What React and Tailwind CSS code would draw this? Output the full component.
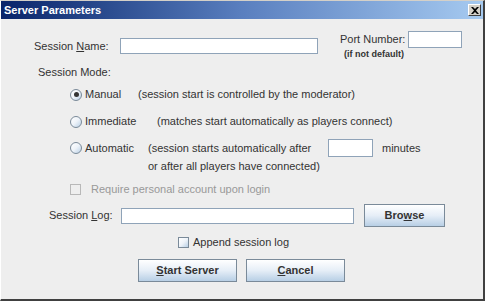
import React from "react";

const font = { fontFamily: '"Liberation Sans", Arial, sans-serif' };

// Ocean-style radio button
function Radio({ checked }) {
  return (
    <span className="relative flex h-[12px] w-[12px] shrink-0 items-center justify-center rounded-full border border-[#7a8a99] bg-gradient-to-br from-white via-[#eef3f9] to-[#b8cfe5]">
      {checked && <span className="h-[5px] w-[5px] rounded-full bg-[#333333]" />}
    </span>
  );
}

function Check({ disabled }) {
  return disabled ? (
    <span className="h-[11px] w-[11px] shrink-0 border border-[#b8b8b8]" />
  ) : (
    <span className="h-[11px] w-[11px] shrink-0 border border-[#7a8a99] bg-gradient-to-br from-white via-[#eef3f9] to-[#b8cfe5]" />
  );
}

function Field({ className }) {
  return <div className={"border border-[#8fa3b8] bg-white " + className} />;
}

function Button({ children, className }) {
  return (
    <button
      className={
        "flex items-center justify-center border border-[#7a8a99] bg-gradient-to-b from-white via-[#e6eef7] to-[#b8cfe5] text-[11px] font-bold text-[#333333] " +
        className
      }
    >
      {children}
    </button>
  );
}

function App() {
  return (
    <div
      className="flex h-[301px] w-[485px] flex-col overflow-hidden border-t border-l border-t-[#d4d0c8] border-l-[#ffffff] border-r-2 border-b-2 border-r-[#404040] border-b-[#404040] bg-[#eeeeee] text-[11px] text-[#333333]"
      style={font}
    >
      {/* title bar */}
      <div className="flex h-[18px] shrink-0 items-center justify-between bg-gradient-to-r from-[#0a246a] via-[#5a7fbf] to-[#a6caf0] pl-[3px] pr-[2px]">
        <span className="text-[11px] font-bold text-white">Server Parameters</span>
        <span className="flex h-[12px] w-[13px] items-center justify-center border border-t-white border-l-white border-r-[#404040] border-b-[#404040] bg-[#d4d0c8]">
          <svg width="8" height="7" viewBox="0 0 8 7">
            <path d="M0 0 L2 0 L4 2 L6 0 L8 0 L5 3.5 L8 7 L6 7 L4 5 L2 7 L0 7 L3 3.5 Z" fill="#000" />
          </svg>
        </span>
      </div>

      {/* session name / port */}
      <div className="mt-[12px] flex h-[28px]">
        <div className="mt-[7px] flex h-[16px] items-center pl-[33px]">
          <span className="w-[86px]">
            Session <span className="underline">N</span>ame:
          </span>
          <Field className="h-[16px] w-[198px]" />
        </div>
        <div className="ml-[22px] flex flex-col">
          <div className="flex h-[17px] items-center">
            <span className="w-[68px]">Port Number:</span>
            <Field className="h-[17px] w-[54px]" />
          </div>
          <span className="ml-[4px] mt-[1px] text-[9px] font-bold leading-[11px]">(if not default)</span>
        </div>
      </div>

      {/* session mode */}
      <div className="mt-[6px] flex h-[14px] items-center pl-[37px]">Session Mode:</div>

      <div className="mt-[8px] flex h-[15px] items-center pl-[69px]">
        <Radio checked />
        <span className="ml-[3px] w-[53px]">Manual</span>
        <span>(session start is controlled by the moderator)</span>
      </div>

      <div className="mt-[12px] flex h-[15px] items-center pl-[69px]">
        <Radio />
        <span className="ml-[3px] w-[72px]">Immediate</span>
        <span>(matches start automatically as players connect)</span>
      </div>

      <div className="mt-[10px] flex h-[18px] items-center pl-[69px]">
        <Radio />
        <span className="ml-[3px] w-[63px]">Automatic</span>
        <span className="w-[180px]">(session starts automatically after</span>
        <Field className="h-[18px] w-[45px]" />
        <span className="ml-[9px]">minutes</span>
      </div>
      <div className="mt-[2px] flex h-[14px] items-center pl-[147px]">or after all players have connected)</div>

      {/* require account */}
      <div className="mt-[9px] flex h-[15px] items-center pl-[69px] text-[#999999]">
        <Check disabled />
        <span className="ml-[10px]">Require personal account upon login</span>
      </div>

      {/* session log */}
      <div className="mt-[7px] flex h-[23px] items-center pl-[48px]">
        <span className="w-[72px]">
          Session <span className="underline">L</span>og:
        </span>
        <Field className="h-[16px] w-[233px]" />
        <Button className="ml-[10px] h-[23px] w-[81px]">
          Bro<span className="underline">w</span>se
        </Button>
      </div>

      {/* append */}
      <div className="mt-[8px] flex h-[15px] items-center pl-[177px]">
        <Check />
        <span className="ml-[4px]">Append session log</span>
      </div>

      {/* buttons */}
      <div className="mt-[9px] flex gap-[9px] pl-[137px]">
        <Button className="h-[23px] w-[99px]">
          <span className="underline">S</span>tart Server
        </Button>
        <Button className="h-[23px] w-[99px]">
          <span className="underline">C</span>ancel
        </Button>
      </div>
    </div>
  );
}

export default App;
